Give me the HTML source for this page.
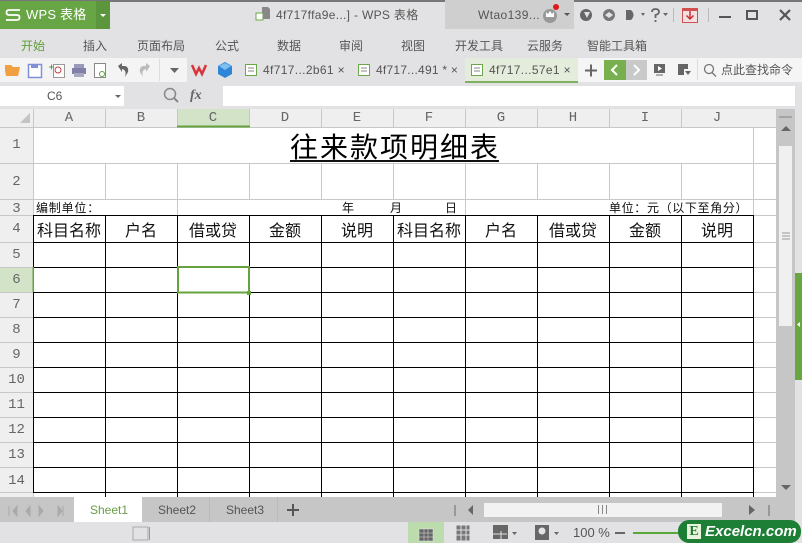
<!DOCTYPE html>
<html><head><meta charset="utf-8"><style>
html,body{margin:0;padding:0}
body{width:802px;height:543px;overflow:hidden;background:#e2e2e4;position:relative;font-family:"Liberation Sans","Noto Sans CJK SC",sans-serif;color:#444}
.a{position:absolute;white-space:nowrap}
.r{position:absolute}
.t{font-size:12px;line-height:16px;color:#555;top:38px}
.d{font-size:12px;line-height:16px;color:#555;top:62px;letter-spacing:.35px}
.h{position:absolute;top:109px;height:18px;width:72px;text-align:center;font:14px/18px "Liberation Mono",monospace;color:#666}
.n{position:absolute;left:0;width:33px;text-align:center;font:14px/18px "Liberation Mono",monospace;color:#666}
.c{position:absolute;width:72px;text-align:center;top:217px;font:16px/24px "Noto Sans CJK SC",sans-serif;color:#111}
.s{font:12px/15px "Noto Sans CJK SC",sans-serif;color:#111}
svg{position:absolute;left:0;top:0}
</style></head><body>
<div class="r" style="left:0;top:0;width:802px;height:2px;background:#777"></div>
<div class="r" style="left:0;top:1px;width:110px;height:28px;background:#68a645"></div>
<div class="r" style="left:96px;top:1px;width:14px;height:28px;background:#5c963c"></div>
<div class="a" style="left:26px;top:6px;font-size:13px;line-height:18px;color:#fff;letter-spacing:.2px">WPS 表格</div>
<div class="r" style="left:445px;top:0;width:129px;height:29px;background:#cfcfcf"></div>
<div class="a" style="left:276px;top:7px;font-size:12px;line-height:16px;color:#555;letter-spacing:.32px">4f717ffa9e...] - WPS 表格</div>
<div class="a" style="left:478px;top:7px;font-size:12px;line-height:16px;color:#555;letter-spacing:.4px">Wtao139...</div>
<div class="a t" style="left:21px;color:#5f9e3a">开始</div><div class="a t" style="left:83px">插入</div><div class="a t" style="left:137px">页面布局</div><div class="a t" style="left:215px">公式</div><div class="a t" style="left:277px">数据</div><div class="a t" style="left:339px">审阅</div><div class="a t" style="left:401px">视图</div><div class="a t" style="left:455px">开发工具</div><div class="a t" style="left:527px">云服务</div><div class="a t" style="left:587px">智能工具箱</div>
<div class="r" style="left:0;top:58px;width:187px;height:24px;background:#f4f4f5"></div>
<div class="r" style="left:465px;top:58px;width:113px;height:23px;background:#e4ecdc;border-bottom:2px solid #7fb05f"></div>
<div class="r" style="left:578px;top:58px;width:224px;height:24px;background:#f5f5f5"></div>
<div class="r" style="left:604px;top:60px;width:22px;height:20px;background:#78b050"></div>
<div class="r" style="left:626px;top:60px;width:21px;height:20px;background:#c9c9c9"></div>
<div class="a d" style="left:263px">4f717...2b61 ×</div><div class="a d" style="left:376px;letter-spacing:.25px">4f717...491 * ×</div><div class="a d" style="left:489px">4f717...57e1 ×</div>
<div class="a" style="left:721px;top:62px;font-size:12px;line-height:16px;color:#555">点此查找命令</div>
<div class="r" style="left:0;top:86px;width:124px;height:20px;background:#fff"></div>
<div class="a" style="left:47px;top:89px;font-size:12px;line-height:15px;color:#555">C6</div>
<div class="a" style="left:190px;top:87px;font:italic bold 14px/18px 'Liberation Serif',serif;color:#666">fx</div>
<div class="r" style="left:223px;top:86px;width:572px;height:20px;background:#fff"></div>

<div class="r" style="left:0;top:109px;width:776px;height:18px;background:#efefef"></div>
<div class="r" style="left:0;top:127px;width:33px;height:370px;background:#efefef"></div>
<div class="r" style="left:33px;top:127px;width:743px;height:370px;background:#fff"></div>
<div class="r" style="left:177px;top:109px;width:73px;height:18px;background:#d3e3c8"></div>
<div class="r" style="left:0;top:267px;width:33px;height:25px;background:#d3e3c8"></div>

<svg width="802" height="543">
<g stroke="#c8c8c8" fill="none">
<path d="M33.500 109V127M105.500 109V127M177.500 109V127M249.500 109V127M321.500 109V127M393.500 109V127M465.500 109V127M537.500 109V127M609.500 109V127M681.500 109V127"/>
<path d="M33.500 127V497M753.500 127V497"/>
<path d="M105.500 163V199M177.500 163V215M249.500 163V199M321.500 163V199M393.500 163V199M465.500 163V215M537.500 163V199M609.500 163V199M681.500 163V199"/>
<path d="M0 127.500H776M0 163.500H776M0 199.500H776M0 215.500H33M0 242.500H33M0 267.500H33M0 292.500H33M0 317.500H33M0 342.500H33M0 367.500H33M0 392.500H33M0 417.500H33M0 442.500H33M0 467.500H33M0 492.500H33M753 215.500H776M753 242.500H776M753 267.500H776M753 292.500H776M753 317.500H776M753 342.500H776M753 367.500H776M753 392.500H776M753 417.500H776M753 442.500H776M753 467.500H776M753 492.500H776"/>
</g>
<g stroke="#000" fill="none">
<path d="M33 215.500H754M33 242.500H754M33 267.500H754M33 292.500H754M33 317.500H754M33 342.500H754M33 367.500H754M33 392.500H754M33 417.500H754M33 442.500H754M33 467.500H754M33 492.500H754"/>
<path d="M33.500 215V492M105.500 215V497M177.500 215V497M249.500 215V497M321.500 215V497M393.500 215V497M465.500 215V497M537.500 215V497M609.500 215V497M681.500 215V497M753.500 215V497"/>
</g>
<rect x="178" y="267" width="71" height="25.500" fill="#fff" stroke="#65a33f" stroke-width="2"/>
<rect x="247" y="291" width="4" height="4" fill="#65a33f"/>
<rect x="177" y="125.500" width="73" height="2" fill="#65a33f"/>
<rect x="32.500" y="267" width="1.500" height="25" fill="#65a33f"/>
<path d="M20 123L30 113V123Z" fill="#c4c4c4"/>

<!-- logo -->
<path d="M20 10H9Q6.500 10 6.500 12.500T9 15H17Q19.500 15 19.500 17.500T17 20H6" fill="none" stroke="#fff" stroke-width="1.800"/>
<path d="M100 14H106L103 17Z" fill="#fff"/>
<!-- title icon -->
<path d="M262 7H268L270 9V19H262Z" fill="#888"/><rect x="256" y="13" width="7" height="7" fill="#fff" stroke="#6aa84a"/>
<!-- toolbar icons -->
<path d="M5 71V65H11L13 67H20L18 76H6Z" fill="#f0a040"/>
<rect x="28.500" y="64.500" width="13" height="13" fill="#fff" stroke="#7f90d8" stroke-width="1.500"/><rect x="31" y="64" width="7" height="4" fill="#7f90d8"/>
<rect x="53.500" y="64.500" width="11" height="13" fill="#fff" stroke="#999"/><circle cx="58" cy="70" r="3" fill="none" stroke="#c04040"/><path d="M49 67H54M51.500 64.500V69.500" stroke="#5aa040"/>
<rect x="72" y="68" width="14" height="6" fill="#8080a8"/><rect x="74" y="64" width="10" height="4" fill="#9a9ab8"/><rect x="74" y="73" width="10" height="4" fill="#a8a8c0"/>
<rect x="94.500" y="63.500" width="11" height="14" fill="#fff" stroke="#888"/><circle cx="102" cy="74" r="2.500" fill="none" stroke="#5aa040"/>
<path d="M118 66L122 63V66H125Q129 67 128 72L125 77Q127 70 122 69V72Z" fill="#666"/>
<path d="M150 66L146 63V66H143Q139 67 140 72L143 77Q141 70 146 69V72Z" fill="#bbb"/>
<path d="M159.500 58.500V81" stroke="#ddd" fill="none"/>
<path d="M170 68H179L174.500 73Z" fill="#666"/>
<path d="M192 65L196 74L199 68L202 74L206 65" fill="none" stroke="#d8333a" stroke-width="2.500"/>
<path d="M225 62L232 66V74L225 78L218 74V66Z" fill="#2f86d8"/><path d="M219 66L225 70L231 66L225 63Z" fill="#7cc0f0"/>
<g fill="#fff" stroke="#6aa84a"><rect x="245.500" y="64.500" width="11" height="11"/><rect x="358.500" y="64.500" width="11" height="11"/><rect x="471.500" y="64.500" width="11" height="11"/></g>
<path d="M248 68H254M248 71H254M361 68H367M361 71H367M474 68H480M474 71H480" stroke="#888"/>
<path d="M585 70.500H597M591 64.500V76.500" stroke="#666" stroke-width="2"/>
<path d="M617 65L612 70L617 75" fill="none" stroke="#fff" stroke-width="2"/><path d="M634 65L639 70L634 75" fill="none" stroke="#fff" stroke-width="2"/>
<rect x="654" y="64" width="11" height="9" fill="#666"/><path d="M658 66L662 68.500L658 71Z" fill="#fff"/><path d="M656 75H663" stroke="#666"/>
<path d="M678 64H688V69H684V75H678Z" fill="#666"/><path d="M685 71H691L688 75Z" fill="#666"/>
<path d="M697.500 59V80" stroke="#ddd"/>
<circle cx="709" cy="69" r="4.500" fill="none" stroke="#777" stroke-width="1.300"/><path d="M712 72.500L716 76.500" stroke="#777" stroke-width="1.300"/>
<path d="M115 95H121L118 98Z" fill="#666"/>
<circle cx="170" cy="94" r="5.500" fill="none" stroke="#888" stroke-width="1.500"/><path d="M174 98L178 102" stroke="#888" stroke-width="2"/>
<!-- window -->
<circle cx="550" cy="16" r="7" fill="#999"/><path d="M546 17V12L548 14L550 11L552 14L554 12V17Z" fill="#fff"/><circle cx="556" cy="7" r="3" fill="#e01818"/>
<path d="M564 13H570L567 16Z" fill="#555"/>
<circle cx="586" cy="15" r="6" fill="#666"/><path d="M584 12H590L587 18Z" fill="#e2e2e4"/>
<circle cx="609" cy="15" r="6" fill="#777"/><path d="M605 15L609 12L613 15L609 18Z" fill="#e2e2e4"/>
<path d="M626 10H631Q636 15 631 20H626Z" fill="#666"/><path d="M641 13H645L643 16Z" fill="#666"/>
<path d="M652 12Q652 9 655.500 9T659 12Q659 14 655.500 15V18M655.500 20V22" fill="none" stroke="#666" stroke-width="1.800"/>
<path d="M663 13H668L665.500 16Z" fill="#666"/>
<path d="M673.500 8V22M708.500 8V22" stroke="#bbb"/>
<rect x="682.500" y="8.500" width="15" height="14" fill="#f4e0e0" stroke="#d05050"/><rect x="682" y="8" width="16" height="3" fill="#d05050"/><path d="M690 11V19M686.500 15.500L690 19L693.500 15.500" fill="none" stroke="#c83030" stroke-width="1.500"/>
<path d="M719 17H731" stroke="#555" stroke-width="2"/>
<rect x="747" y="11" width="10" height="8" fill="none" stroke="#555" stroke-width="2"/>
<path d="M780 10L790 20M790 10L780 20" stroke="#555" stroke-width="2.200"/>
</svg>

<div class="h" style="left:33px">A</div><div class="h" style="left:105px">B</div><div class="h" style="left:177px">C</div><div class="h" style="left:249px">D</div><div class="h" style="left:321px">E</div><div class="h" style="left:393px">F</div><div class="h" style="left:465px">G</div><div class="h" style="left:537px">H</div><div class="h" style="left:609px">I</div><div class="h" style="left:681px">J</div>
<div class="n" style="top:136px">1</div><div class="n" style="top:173px">2</div><div class="n" style="top:200px">3</div><div class="n" style="top:220px">4</div><div class="n" style="top:246px">5</div><div class="n" style="top:271px">6</div><div class="n" style="top:296px">7</div><div class="n" style="top:321px">8</div><div class="n" style="top:346px">9</div><div class="n" style="top:371px">10</div><div class="n" style="top:396px">11</div><div class="n" style="top:421px">12</div><div class="n" style="top:446px">13</div><div class="n" style="top:472px">14</div>

<div class="a" style="left:290px;top:128px;font:28px/36px 'Noto Sans CJK SC',sans-serif;color:#000;letter-spacing:2px">往来款项明细表</div>
<div class="r" style="left:290px;top:160px;width:209px;height:2px;background:#111"></div>
<div class="a s" style="left:36px;top:200px;letter-spacing:.8px">编制单位：</div>
<div class="a s" style="left:342px;top:200px">年</div><div class="a s" style="left:390px;top:200px">月</div><div class="a s" style="left:445px;top:200px">日</div>
<div class="a s" style="left:609px;top:200px;letter-spacing:.65px">单位：元（以下至角分）</div>
<div class="c" style="left:33px">科目名称</div><div class="c" style="left:105px">户名</div><div class="c" style="left:177px">借或贷</div><div class="c" style="left:249px">金额</div><div class="c" style="left:321px">说明</div><div class="c" style="left:393px">科目名称</div><div class="c" style="left:465px">户名</div><div class="c" style="left:537px">借或贷</div><div class="c" style="left:609px">金额</div><div class="c" style="left:681px">说明</div>

<div class="r" style="left:776px;top:109px;width:19px;height:388px;background:#c6c6c6"></div>
<div class="r" style="left:779px;top:146px;width:13px;height:180px;background:#f0f0f0"></div>
<div class="r" style="left:795px;top:273px;width:7px;height:107px;background:#68a63f"></div>
<div class="r" style="left:0;top:497px;width:795px;height:25px;background:#c6c6c6"></div>
<div class="r" style="left:74px;top:497px;width:68px;height:25px;background:#fff"></div>
<div class="r" style="left:484px;top:503px;width:238px;height:14px;background:#f2f2f2"></div>
<div class="a" style="left:90px;top:502px;font-size:12px;line-height:16px;color:#6a9d48">Sheet1</div>
<div class="a" style="left:158px;top:502px;font-size:12px;line-height:16px;color:#555">Sheet2</div>
<div class="a" style="left:226px;top:502px;font-size:12px;line-height:16px;color:#555">Sheet3</div>
<svg width="802" height="543" style="pointer-events:none">
<path d="M287 510H299M293 504V516" stroke="#555" stroke-width="2"/>
<path d="M209.500 497V522M277.500 497V522" stroke="#bbb"/>
<path d="M9 506V516M17 506L13 511L17 516ZM30 506L26 511L30 516ZM39 506L43 511L39 516ZM63 506V516M58 506L62 511L58 516Z" fill="#aaa" stroke="#aaa"/>
<path d="M455 505V516M769 505V516" stroke="#888" stroke-width="1.500"/>
<path d="M473 505L468 510L473 515ZM749 505L755 510L749 515Z" fill="#666"/>
<path d="M598.500 505V514M602.500 505V514M606.500 505V514" stroke="#888"/>
<path d="M781 131L786 126L791 131Z" fill="#666"/><path d="M779 117H792" stroke="#999" stroke-width="1.500"/>
<path d="M782 233H790M782 236H790M782 239H790" stroke="#999"/>
<path d="M781 485H791L786 490Z" fill="#666"/>
<path d="M800 322L797 324.500L800 327Z" fill="#fff"/>
<rect x="133" y="527" width="15" height="13" fill="none" stroke="#aaa"/><path d="M149.500 527V540" stroke="#999"/>
<rect x="408" y="522" width="36" height="21" fill="#bcdcae"/>
<path d="M419 529H433V541H419ZM419 533H433M419 537H433M424 529V541M428 529V541" fill="#666" stroke="#e2e2e4" stroke-width=".500"/>
<path d="M456 525H470V541H456ZM456 530H470M456 535H470M461 525V541M466 525V541" fill="#777" stroke="#e2e2e4" stroke-width="1"/>
<rect x="493" y="525" width="15" height="14" fill="#666"/><path d="M493 534H507M501 531V539" stroke="#e2e2e4"/><path d="M512 532H517L514.500 535Z" fill="#666"/>
<rect x="535" y="525" width="14" height="15" fill="#666"/><circle cx="542" cy="531" r="3.500" fill="#e2e2e4"/><path d="M554 532H559L556.500 535Z" fill="#666"/>
<path d="M615 533H625" stroke="#666" stroke-width="2"/><path d="M633 533H690" stroke="#5aa83c" stroke-width="2"/>
<rect x="678" y="520" width="123" height="23" rx="11" fill="#1d7f35"/>
<rect x="687" y="524" width="14" height="15" fill="#e8f2dc"/>
</svg>
<div class="a" style="left:573px;top:525px;font-size:13px;line-height:16px;color:#555">100 %</div>
<div class="a" style="left:688px;top:523px;width:12px;text-align:center;font:bold 14px/17px 'Liberation Serif',serif;color:#1d7f35">E</div>
<div class="a" style="left:705px;top:522px;font:italic bold 15px/19px 'Liberation Sans',sans-serif;color:#fff;letter-spacing:0">Excelcn.com</div>
</body></html>
